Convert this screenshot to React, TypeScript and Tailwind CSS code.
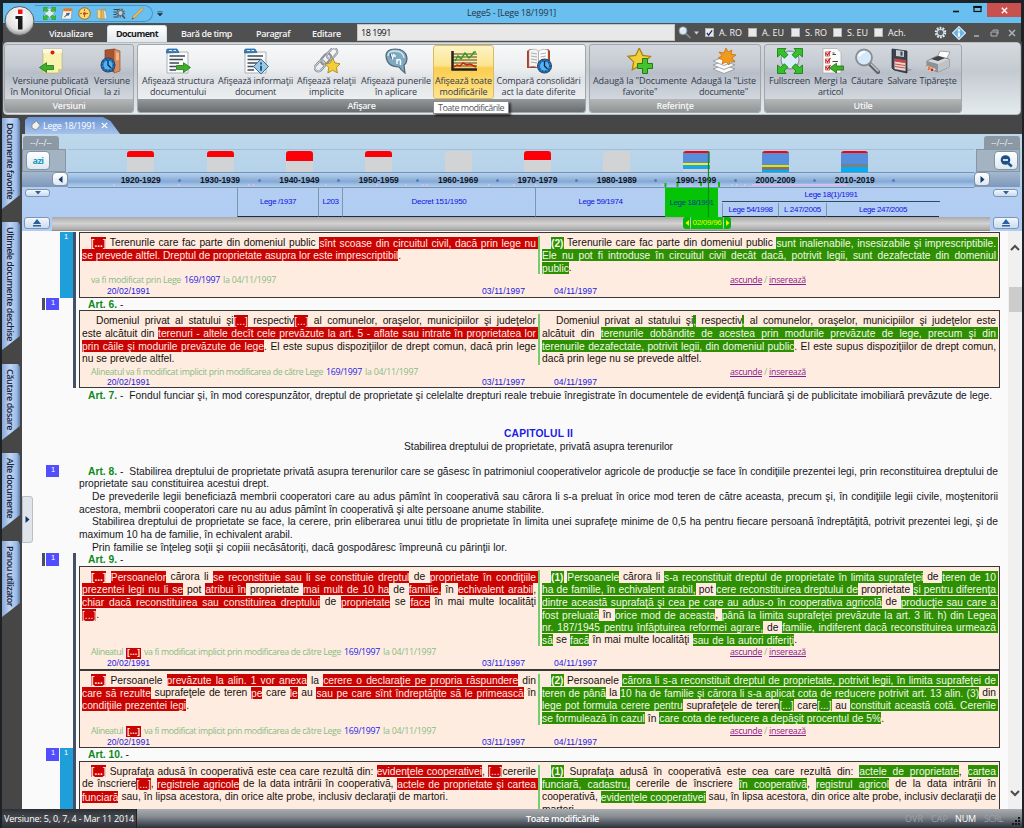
import React, { useLayoutEffect, useRef } from "react";

const UI = "font-['Open_Sans','Noto_Sans',sans-serif]";
const DOC = "font-['Liberation_Sans',Arial,sans-serif]";

/** One line of text tracked so that it fills exactly `w` pixels. */
function Fit({ w, children, className = "" }: { w: number; children: string; className?: string }) {
  const ref = useRef<HTMLSpanElement>(null);
  useLayoutEffect(() => {
    const el = ref.current;
    if (!el) return;
    el.style.letterSpacing = "0px";
    const natural = el.getBoundingClientRect().width;
    el.style.letterSpacing = `${(w - natural) / children.length}px`;
  }, [w, children]);
  return (
    <span ref={ref} className={`inline-block shrink-0 whitespace-pre ${className}`}>
      {children}
    </span>
  );
}

/* ---------- icons ---------- */

const Svg = ({ s = 26, children }: { s?: number; children: React.ReactNode }) => (
  <svg width={s} height={s} viewBox="0 0 26 26" className="shrink-0">
    {children}
  </svg>
);

const GreenArrow = ({ x = 0, y = 0, flip = false }) => (
  <path
    transform={flip ? `translate(${x + 15} ${y}) scale(-1 1)` : `translate(${x} ${y})`}
    d="M.5 3.500h7V.700L14.500 5.500 7.500 10.500V7.600h-7z"
    fill="#3fae2a"
    stroke="#1c7513"
    strokeWidth=".8"
  />
);

const NoteIcon = () => (
  <Svg>
    <path d="M5 1h19v20l-4 4H5z" fill="#f8f3ae" stroke="#b9b27a" strokeWidth=".7" />
    <path d="M24 21h-4v4z" fill="#d8cf7d" />
    <path d="M5 1h19v4H5z" fill="#fcfadc" />
    <circle cx="14.500" cy="4.500" r="2" fill="#e3170d" />
    <GreenArrow x={1} y={14} flip />
  </Svg>
);
const Clock = ({ cx, cy, r }: { cx: number; cy: number; r: number }) => (
  <g>
    <circle cx={cx} cy={cy} r={r} fill="#2f3b49" />
    <circle cx={cx} cy={cy} r={r - 0.8} fill="#2378c6" />
    <circle cx={cx} cy={cy} r={r - 3} fill="#58b0ee" />
    <path d={`M${cx} ${cy - r + 2.5}V${cy}L${cx + 3} ${cy + 3}`} stroke="#0b2747" strokeWidth="1.300" fill="none" />
    <circle cx={cx} cy={cy} r={r - 2} fill="none" stroke="#0f3c74" strokeWidth="1.200" strokeDasharray="1 2.300" />
  </g>
);
const DoorIcon = () => (
  <Svg>
    <path d="M6 2l10-1v23l-10-2z" fill="#a8552f" stroke="#6d3018" strokeWidth=".6" />
    <path d="M15 1l6 2v20l-6 2z" fill="#d98d5f" stroke="#8a4726" strokeWidth=".6" />
    <path d="M17 4l3 1v7l-3 .5z" fill="#efb48b" />
    <Clock cx={9} cy={17} r={7.5} />
  </Svg>
);
const Sheet = ({ children }: { children?: React.ReactNode }) => (
  <Svg>
    <path d="M2 4h21v21H2z" fill="#fbfbfb" stroke="#9aa2aa" strokeWidth=".8" />
    <path d="M1.500 5V2.500Q1.500 1 3 1h9l2 3.500z" fill="#3a7fb8" stroke="#235a8c" strokeWidth=".7" />
    <path d="M4 2.500h3M8.500 2.500H11" stroke="#d6ecfa" strokeWidth="1" />
    <path d="M4.500 8H20M4.500 11.500H18M4.500 15H14M4.500 18.500H11M4.500 22H11" stroke="#3d4b5a" strokeWidth="1.300" />
    {children}
  </Svg>
);
const StructIcon = () => (
  <Sheet>
    <GreenArrow x={11} y={14} />
  </Sheet>
);
const InfoSheetIcon = () => (
  <Sheet>
    <path d="M18 11l7.500 7.500L18 26l-7.500-7.500z" fill="#9cc9e4" stroke="#3f6f92" strokeWidth="1" />
    <path d="M18 14.500v2M18 17.700v5" stroke="#1d5c8c" strokeWidth="2" />
  </Sheet>
);
const Star = ({ d = "", k = 1 }: { d?: string; k?: number }) => (
  <path
    transform={`${d} scale(${k})`}
    d="M9 0l2.800 5.900 6.200.800-4.500 4.400 1.100 6.400L9 14.400 3.400 17.500l1.100-6.400L0 6.700l6.200-.800z"
    fill="#f2cf3a"
    stroke="#a98212"
    strokeWidth="1"
  />
);
const LinkStarIcon = () => (
  <Svg>
    <g fill="none" stroke="#8b9198" strokeWidth="2.200">
      <rect x="14" y="-1" width="7" height="12" rx="3.500" transform="rotate(42 17 6)" />
      <rect x="8.500" y="5" width="7" height="12" rx="3.500" transform="rotate(42 12 11)" />
      <rect x="2.500" y="12" width="7" height="12" rx="3.500" transform="rotate(42 6 18)" />
    </g>
    <g fill="none" stroke="#e4e7ea" strokeWidth=".7">
      <rect x="14" y="-1" width="7" height="12" rx="3.500" transform="rotate(42 17 6)" />
      <rect x="2.500" y="12" width="7" height="12" rx="3.500" transform="rotate(42 6 18)" />
    </g>
    <Star d="translate(11 10)" k={0.85} />
  </Svg>
);
const BubbleIcon = () => (
  <Svg>
    <path d="M3 8Q3 1 12 1Q23 1 24 10Q24 15 21 17L22 25Q18 22 16 19Q4 19 3 8z" fill="#7ea9c0" stroke="#4f6672" strokeWidth="1.200" />
    <path d="M5 8Q5 3 12 3Q20 3 21 10" fill="none" stroke="#cfe6f1" strokeWidth="1.500" />
    <path d="M8 6l1.500 4L11 6M11 8h2" stroke="#f4fbff" strokeWidth="1.500" fill="none" />
    <path d="M14 11v5M14 13q3-3 3.500 0v4" stroke="#f4fbff" strokeWidth="1.500" fill="none" />
    <path d="M7 5.500l1.500 5" stroke="#1c3a4c" strokeWidth=".8" />
  </Svg>
);
const ChartIcon = () => (
  <svg width="28" height="26" viewBox="0 0 28 26" className="shrink-0">
    <path d="M3 6h24M3 9h24M3 12h24M3 15h24M3 18h24" stroke="#4b4736" strokeWidth="1.200" />
    <path d="M2.500 3v18.500H27" stroke="#222" strokeWidth="2.500" fill="none" />
    <path d="M5 13l3-5 3 3 4-6 4 5 3-3 2-3h2" stroke="#2f9d1e" strokeWidth="1.400" fill="none" />
    <path d="M4 19l3-2 3 1 3-3 4 2 3-1 6 3" stroke="#d8200d" strokeWidth="1.500" fill="none" />
  </svg>
);
const BookIcon = () => (
  <Svg>
    <path d="M1 3l3-2 9 2.500L22 1l2 2v17H1z" fill="#ad3e27" />
    <path d="M3 2Q9 0 12.500 3v17Q8 17 3 19z" fill="#f3f3f1" stroke="#8e8e8e" strokeWidth=".5" />
    <path d="M12.500 3Q17 0 22 2v17q-5-2-9.500 1z" fill="#fff" stroke="#8e8e8e" strokeWidth=".5" />
    <path d="M5 5l6 1M5 8l6 1M5 11l6 1M5 14l6 1M14.500 6l5.500-1M14.500 9l5.500-1" stroke="#a0a4a8" strokeWidth=".9" />
    <Clock cx={18.5} cy={18} r={7.5} />
  </Svg>
);
const StarPlusIcon = () => (
  <Svg>
    <Star d="translate(1 0)" k={1.25} />
    <path d="M15.500 10.500h5v5h5v5h-5v5h-5v-5h-5v-5h5z" fill="#46c22d" stroke="#1f7d12" strokeWidth="1" />
  </Svg>
);
const StackIcon = () => (
  <Svg>
    <path d="M2 21l11-4 11 4-11 4.500z" fill="#fafafa" stroke="#8f959c" strokeWidth=".8" />
    <path d="M2 17l11-4 11 4-11 4.500z" fill="#fafafa" stroke="#8f959c" strokeWidth=".8" />
    <path d="M2 13l11-4 11 4-11 4.500z" fill="#fdfdfd" stroke="#8f959c" strokeWidth=".8" />
    <path d="M15 0l2 4 4-2-1 4 5 1-4 3 3 4-5-1-1 4-3-3-4 2 1-4-5-2 4-2-3-4 5 1z" fill="#f29a1c" stroke="#c16c07" strokeWidth=".7" />
  </Svg>
);
const Corners = () => (
  <path
    d="M.5.500h8.500L7 3l4 3.700L7.500 10.200 3.500 6.500.500 9zM25.500.500h-8.500L19 3l-4 3.700 3.500 3.500 4-3.700L25.500 9zM.5 25.500h8.500L7 23l4-3.700-3.500-3.500-4 3.700L.500 17zM25.500 25.500h-8.500L19 23l-4-3.700 3.500-3.500 4 3.700 3-2.500z"
    fill="#35c12c"
    stroke="#14780f"
    strokeWidth=".8"
  />
);
const FullIcon = ({ s = 26 }) => (
  <Svg s={s}>
    <circle cx="13" cy="12" r="9" fill="#d9ecf8" stroke="#8d98a1" strokeWidth="1.300" />
    <Corners />
  </Svg>
);
const ListIcon = () => (
  <Svg>
    <path d="M5 .500h14l4 4V25H5z" fill="#fbfbfb" stroke="#a6a9ad" strokeWidth=".7" />
    <path d="M14.500 6.500H18M14.500 13.500h5.500M14.500 5h2" stroke="#44484c" strokeWidth="1.200" />
    {[4, 11, 18].map((y) => (
      <g key={y}>
        <path d={`M7.500 ${y}h4v4h-4z`} fill="#fff" stroke="#b33a34" strokeWidth=".8" />
        <path d={`M8 ${y + 1}l1.500 2 3-4`} stroke="#d31414" strokeWidth="1.200" fill="none" />
      </g>
    ))}
    <GreenArrow x={11} y={14.5} flip />
  </Svg>
);
const LensIcon = ({ s = 26 }) => (
  <Svg s={s}>
    <path d="M16 16l8 8" stroke="#5d6266" strokeWidth="4" strokeLinecap="round" />
    <path d="M17 16l7 7" stroke="#c7cbce" strokeWidth="1.500" strokeLinecap="round" />
    <circle cx="10" cy="9.500" r="8" fill="#d6e9f8" stroke="#888e94" strokeWidth="1.800" />
    <path d="M5 8q2-4 6-4" stroke="#fff" strokeWidth="2" fill="none" />
  </Svg>
);
const DiskIcon = () => (
  <Svg>
    <path d="M12 25l12-3-6-2z" fill="#9fa3a7" />
    <path d="M3 1l15 2v22L5 22 3 20z" fill="#3b4250" stroke="#20252e" strokeWidth=".7" />
    <path d="M7 2l8 1v6L7 8z" fill="#c9ced4" />
    <path d="M11.500 3.500l2 .2v4l-2-.2z" fill="#3b4250" />
    <path d="M5.500 11l11 1.500v10.500L5.500 21z" fill="#e8d5d1" />
    <path d="M5.500 11l11 1.500v2.200L5.500 13zM6 16l10 1.500M6 18.500L16 20" fill="#c5443c" stroke="#c5443c" strokeWidth=".9" />
  </Svg>
);
const PrintIcon = () => (
  <Svg>
    <path d="M12 10l3-7 10 1-4 8z" fill="#fdfdfd" stroke="#888" strokeWidth=".7" />
    <path d="M2 13l10-5 12 3v8l-11 5-11-4z" fill="#d5d7da" stroke="#6c7074" strokeWidth=".8" />
    <path d="M2 13l11 3v8L2 20z" fill="#8e9296" />
    <path d="M13 16l11-5v8l-11 5z" fill="#bfc3c7" />
    <path d="M6 11l7-3 7 2-7 3z" fill="#3e4246" />
    <path d="M2 18l9 3-4 3-6-3z" fill="#fff" stroke="#999" strokeWidth=".4" />
    <circle cx="4" cy="20.500" r="1.700" fill="#e7801c" />
    <circle cx="7" cy="21.800" r="1.500" fill="#d02018" />
  </Svg>
);
const CalIcon = () => (
  <Svg s={12}>
    <path d="M5 3l19-1-2 22H1z" fill="#f3f3f3" stroke="#777" strokeWidth="1" />
    <path d="M6 1h18l-1 6H5z" fill="#ec7a1c" />
    <path d="M7 20l8-6v3l4-6-8 1 2 1z" fill="#35516e" stroke="#35516e" />
  </Svg>
);
const CompassIcon = () => (
  <Svg s={13}>
    <circle cx="13" cy="13" r="11.500" fill="#fbd679" stroke="#a9690d" strokeWidth="2" />
    <path d="M13 4v18M4 13h18" stroke="#a35b08" strokeWidth="1.800" strokeDasharray="4 2" />
    <circle cx="13" cy="13" r="3" fill="#b94f15" />
  </Svg>
);
const FolderIcon = () => (
  <Svg s={12}>
    <path d="M3 3l8 2v19l-8-3z" fill="#f8d985" stroke="#b08732" />
    <path d="M11 4l9-2v20l-9 3z" fill="#edb84c" stroke="#a87620" />
    <path d="M16 5l5 1 3 17-6 1z" fill="#dfe3e6" stroke="#888" />
  </Svg>
);
const GearIcon = () => (
  <Svg s={13}>
    <circle cx="13" cy="13" r="9" fill="none" stroke="#e4eaee" strokeWidth="5" strokeDasharray="3.500 2.150" />
    <circle cx="13" cy="13" r="6.500" fill="#59636b" stroke="#cdd6dc" strokeWidth="2.500" />
  </Svg>
);
const FindGearIcon = () => (
  <Svg s={13}>
    <path d="M1 5h12M1 10h6M1 15h6M1 20h10" stroke="#3a464f" strokeWidth="2" />
    <circle cx="15" cy="12" r="7" fill="none" stroke="#5d676f" strokeWidth="4" strokeDasharray="3 1.800" />
    <circle cx="15" cy="12" r="5" fill="#c6ced5" stroke="#4b545b" strokeWidth="1.500" />
    <path d="M19 17l5 6" stroke="#4b545b" strokeWidth="3" />
  </Svg>
);
const PencilIcon = () => (
  <Svg s={13}>
    <path d="M22 1l3 3L7 22l-5 3 2-6z" fill="#f4c15c" stroke="#a5721b" strokeWidth="1" />
    <path d="M2 25l1.500-4 2.500 2z" fill="#5a4630" />
  </Svg>
);
const DiamondInfo = () => (
  <Svg s={14}>
    <path d="M13 1l12 12-12 12L1 13z" fill="#64b5e5" stroke="#d9eef8" strokeWidth="2" />
    <path d="M13 6v4M13 12v8" stroke="#fff" strokeWidth="4" />
  </Svg>
);

/* ---------- title and menu ---------- */

function TitleBar() {
  return (
    <div className="flex h-[20px] bg-[#69bff0]">
      <div className="ml-[32px] mt-[2px] flex h-[17px] w-[118px] items-center gap-[5px] rounded-r-[9px] border border-l-0 border-[#4b93bd] pl-[8px]">
        <FullIcon s={13} />
        <CalIcon />
        <CompassIcon />
        <FolderIcon />
        <FindGearIcon />
        <PencilIcon />
      </div>
      <div className="mt-[8px] ml-[4px]">
        <svg width="6" height="6" viewBox="0 0 6 6">
          <path d="M.5.800h5M.500 2.500h5L3 5z" fill="#263746" stroke="#263746" strokeWidth=".7" />
        </svg>
      </div>
      <div className={`ml-[304px] mt-[2px] w-[92px] text-[9px] leading-[16px] text-[#1f3644] ${UI}`}>
        <Fit w={89}>Lege5 - [Lege 18/1991]</Fit>
      </div>
      <div className="ml-auto flex">
        <svg width="46" height="14" viewBox="0 0 46 14">
          <path d="M12 8.500h6" stroke="#111" strokeWidth="1.600" />
          <rect x="33" y="3.500" width="7" height="5" fill="none" stroke="#111" strokeWidth="1.200" />
          <path d="M32.500 4h8" stroke="#111" strokeWidth="2" />
        </svg>
        <div className="flex h-[14px] w-[34px] items-center justify-center bg-[#c8504e]">
          <svg width="7" height="7" viewBox="0 0 7 7">
            <path d="M.8.800l5.400 5.400M6.200.800L.800 6.200" stroke="#fff" strokeWidth="1.400" />
          </svg>
        </div>
      </div>
    </div>
  );
}

function Check({ on = false, label, w, gap }: { on?: boolean; label: string; w: number; gap: string }) {
  return (
    <div className={`flex items-center gap-[5px] ${gap}`}>
      <div className="flex size-[9px] items-center justify-center border border-[#b4b4b4] bg-[#e9e9e9]">
        {on && (
          <svg width="8" height="8" viewBox="0 0 8 8">
            <path d="M1 4l2 2.500L7 1" stroke="#16376f" strokeWidth="1.500" fill="none" />
          </svg>
        )}
      </div>
      <Fit w={w}>{label}</Fit>
    </div>
  );
}

function MenuBar() {
  return (
    <div className={`flex h-[19px] items-center bg-[#505050] text-[9px] font-semibold text-[#f4f4f4] ${UI}`}>
      <Fit w={44} className="ml-[46px] mt-[2px]">Vizualizare</Fit>
      <div className="ml-[14px] mt-[2px] flex h-[17px] w-[60px] items-center justify-center rounded-t-[3px] border border-b-0 border-[#c9e4ee] bg-[linear-gradient(#ffffff,#e3e8ec)] font-bold text-[#1c1c1c]">
        <Fit w={42}>Document</Fit>
      </div>
      <Fit w={51} className="ml-[14px] mt-[2px]">Bară de timp</Fit>
      <Fit w={34} className="ml-[24px] mt-[2px]">Paragraf</Fit>
      <Fit w={29} className="ml-[22px] mt-[2px]">Editare</Fit>
      <div className="ml-[16px] flex h-[17px] w-[318px] items-center border border-[#c5c5c5] bg-[#e8e8e8] pl-[3px] text-[9px] font-normal leading-none text-[#111]">
        <Fit w={30}>18 1991</Fit>
      </div>
      <div className="ml-[3px]">
        <LensIcon s={13} />
      </div>
      <svg width="5" height="4" viewBox="0 0 5 4" className="ml-[3px]">
        <path d="M0 .500h5L2.500 3.500z" fill="#cfcfcf" />
      </svg>
      <div className="flex font-medium">
        <Check on label="A. RO" w={23} gap="ml-[6px]" />
        <Check label="A. EU" w={22} gap="ml-[6px]" />
        <Check label="S. RO" w={22} gap="ml-[7px]" />
        <Check label="S. EU" w={21} gap="ml-[6px]" />
        <Check label="Ach." w={18} gap="ml-[6px]" />
      </div>
      <div className="ml-auto mr-[3px] flex items-center">
        <GearIcon />
        <div className="ml-[5px]">
          <DiamondInfo />
        </div>
        <svg width="52" height="12" viewBox="0 0 52 12">
          <path d="M8 9h5" stroke="#aab4bb" strokeWidth="1.500" />
          <path d="M25 5h6v4h-6zM27 4v-1h5v4" stroke="#aab4bb" strokeWidth="1" fill="none" />
          <path d="M43 3l6 6M49 3l-6 6" stroke="#aab4bb" strokeWidth="1.500" />
        </svg>
      </div>
    </div>
  );
}

/* ---------- ribbon ---------- */

type Btn = { box: string; icon: React.ReactNode; l1: string; w1: number; l2?: string; w2?: number; hot?: boolean };

function RibbonButton({ box, icon, l1, w1, l2, w2 = 0, hot }: Btn) {
  return (
    <div
      className={`flex h-[52px] shrink-0 flex-col items-center pt-[2px] ${box} ${
        hot ? "rounded-[2px] bg-[linear-gradient(#fdf3c4_0%,#fce48f_38%,#fbcd4f_42%,#fde58e_100%)] outline outline-[#d9bb62]" : ""
      }`}
    >
      {icon}
      <div className="mt-[2px] h-[10.500px] leading-[10.500px]">
        <Fit w={w1}>{l1}</Fit>
      </div>
      {l2 && (
        <div className="h-[10.500px] leading-[10.500px]">
          <Fit w={w2}>{l2}</Fit>
        </div>
      )}
    </div>
  );
}

function Group({ label, lw, box, pad, light, btns }: { label: string; lw: number; box: string; pad: string; light?: boolean; btns: Btn[] }) {
  return (
    <div
      className={`flex h-[69px] shrink-0 flex-col overflow-hidden rounded-[3px] border border-[#a2a6aa] ${box} ${
        light ? "bg-[linear-gradient(#f7f8f9_0%,#eceef0_35%,#dfe2e5_50%,#f5f7f8_100%)]" : "bg-[linear-gradient(#d3d7dd_0%,#c6cbd3_30%,#b7bec8_42%,#dfe4e8_100%)]"
      }`}
    >
      <div className={`flex h-[54px] pt-[1px] ${pad}`}>
        {btns.map((b) => (
          <RibbonButton key={b.l1 + b.l2} {...b} />
        ))}
      </div>
      <div
        className={`flex h-[13px] items-center justify-center font-semibold text-[#f5f5f5] ${
          light ? "bg-[linear-gradient(#94989b,#6a6d70)]" : "bg-[linear-gradient(#b4b6b8,#919496)]"
        }`}
      >
        <Fit w={lw}>{label}</Fit>
      </div>
    </div>
  );
}

function Ribbon() {
  return (
    <div
      className={`relative z-10 mx-[1px] flex h-[73px] gap-[3px] rounded-[4px] border border-[#b8bcc0] bg-[linear-gradient(#d6dade_0%,#c4cad1_40%,#e4ebed_100%)] pt-[1px] text-[9px] font-medium text-[#34394b] ${UI}`}
    >
      <Group
        label="Versiuni" lw={33} box="w-[130px]" pad="pl-[3px]"
        btns={[
          { box: "w-[85px]", icon: <NoteIcon />, l1: "Versiune publicată", w1: 76, l2: "în Monitorul Oficial", w2: 80 },
          { box: "w-[38px]", icon: <DoorIcon />, l1: "Versiune", w1: 36, l2: "la zi", w2: 16 },
        ]}
      />
      <Group
        light label="Afişare" lw={28} box="w-[449px]" pad="pl-[2px]"
        btns={[
          { box: "w-[76px]", icon: <StructIcon />, l1: "Afişează structura", w1: 72, l2: "documentului", w2: 56 },
          { box: "w-[79px]", icon: <InfoSheetIcon />, l1: "Afişează informaţii", w1: 75, l2: "document", w2: 41 },
          { box: "w-[63px]", icon: <LinkStarIcon />, l1: "Afişează relaţii", w1: 59, l2: "implicite", w2: 35 },
          { box: "w-[76px]", icon: <BubbleIcon />, l1: "Afişează punerile", w1: 70, l2: "în aplicare", w2: 42 },
          { box: "w-[59px]", icon: <ChartIcon />, l1: "Afişează toate", w1: 57, l2: "modificările", w2: 48, hot: true },
          { box: "w-[91px]", icon: <BookIcon />, l1: "Compară consolidări", w1: 84, l2: "act la date diferite", w2: 74 },
        ]}
      />
      <Group
        label="Referinţe" lw={37} box="w-[172px]" pad="pl-[1px]"
        btns={[
          { box: "w-[98px]", icon: <StarPlusIcon />, l1: 'Adaugă la "Documente', w1: 94, l2: 'favorite"', w2: 35 },
          { box: "w-[69px]", icon: <StackIcon />, l1: 'Adaugă la "Liste', w1: 65, l2: 'documente"', w2: 49 },
        ]}
      />
      <Group
        label="Utile" lw={19} box="w-[198px]" pad="pl-[2px]"
        btns={[
          { box: "w-[45px]", icon: <FullIcon />, l1: "Fullscreen", w1: 41 },
          { box: "w-[37px]", icon: <ListIcon />, l1: "Mergi la", w1: 33, l2: "articol", w2: 25 },
          { box: "w-[36px]", icon: <LensIcon />, l1: "Căutare", w1: 32 },
          { box: "w-[34px]", icon: <DiskIcon />, l1: "Salvare", w1: 29 },
          { box: "w-[38px]", icon: <PrintIcon />, l1: "Tipăreşte", w1: 37 },
        ]}
      />
      <div className="absolute left-[429px] top-[58px] flex h-[13px] w-[76px] items-center justify-center border border-[#8a8a8a] bg-white text-[#55585c] shadow-[2px_2px_2px_rgba(0,0,0,0.6)]">
        <Fit w={66}>Toate modificările</Fit>
      </div>
    </div>
  );
}

/* ---------- side tabs ---------- */

function SideTab({ label, box, w }: { label: string; box: string; w: number }) {
  return (
    <div
      className={`w-[18px] shrink-0 bg-[linear-gradient(90deg,#86a8dc_0%,#c2d6f3_45%,#9dbbe6_80%,#5f7fae_100%)] pl-[2px] pt-[5px] [clip-path:polygon(0_0,90%_0,100%_3px,100%_calc(100%-14px),0_100%)] ${box}`}
    >
      <div className="text-[9px] font-semibold leading-[13px] text-[#16243c] [writing-mode:vertical-rl]">
        <FitV w={w}>{label}</FitV>
      </div>
    </div>
  );
}
function FitV({ w, children }: { w: number; children: string }) {
  const ref = useRef<HTMLSpanElement>(null);
  useLayoutEffect(() => {
    const el = ref.current;
    if (!el) return;
    el.style.letterSpacing = "0px";
    const natural = el.getBoundingClientRect().height;
    el.style.letterSpacing = `${(w - natural) / children.length}px`;
  }, [w, children]);
  return (
    <span ref={ref} className="inline-block whitespace-pre">
      {children}
    </span>
  );
}

/* ---------- timeline ---------- */

const DECADES: { y: string; bar: React.ReactNode }[] = [
  { y: "1920-1929", bar: <div className="h-[6px] bg-[#fb0007]" /> },
  { y: "1930-1939", bar: <div className="h-[6px] bg-[#fb0007]" /> },
  { y: "1940-1949", bar: <div className="h-[10px] bg-[#fb0007]" /> },
  { y: "1950-1959", bar: <div className="h-[6px] bg-[#fb0007]" /> },
  { y: "1960-1969", bar: null },
  { y: "1970-1979", bar: <div className="h-[9px] bg-[#fb0007]" /> },
  { y: "1980-1989", bar: null },
  {
    y: "1990-1999",
    bar: (
      <>
        <div className="h-[2px] bg-[#fb0007]" />
        <div className="h-[10px] bg-[#568edb]" />
        <div className="h-[2px] bg-[#fdf000]" />
        <div className="h-[4px] bg-[#1aa6ec]" />
      </>
    ),
  },
  {
    y: "2000-2009",
    bar: (
      <>
        <div className="h-[2px] bg-[#fb0007]" />
        <div className="h-[12px] bg-[#568edb]" />
        <div className="h-[2px] bg-[#e8e000]" />
        <div className="h-[3px] bg-[#777]" />
        <div className="h-[3px] bg-[#06acf2]" />
      </>
    ),
  },
  {
    y: "2010-2019",
    bar: (
      <>
        <div className="h-[2px] bg-[#fb0007]" />
        <div className="h-[11px] bg-[#568edb]" />
        <div className="h-[3px] bg-[#7c7f84]" />
        <div className="h-[6px] bg-[#06acf2]" />
      </>
    ),
  },
];

const Tri = ({ d, w = 8, h = 6, fill = "#2d5f9e" }: { d: string; w?: number; h?: number; fill?: string }) => (
  <svg width={w} height={h} viewBox={`0 0 ${w} ${h}`}>
    <path d={d} fill={fill} />
  </svg>
);

const knob = "flex items-center justify-center rounded-[3px] border border-[#7d95b3] bg-[linear-gradient(#f2f7fc,#c9dcee)]";

function TimelineSide({ right }: { right?: boolean }) {
  return (
    <div className={`flex w-[46px] shrink-0 flex-col ${right ? "mr-[2px] items-end" : "items-start"}`}>
      <div className={`mt-[2px] flex h-[13px] w-[36px] items-center justify-center rounded-t-[3px] bg-[#8c99a5] text-[8px] text-[#eef2f5] ${right ? "" : "ml-[1px]"}`}>
        --/--/--
      </div>
      <div className={`flex h-[23px] w-[44px] items-start border border-[#8696a5] bg-[#a3b3c2] pt-[1px] ${right ? "justify-end pr-[1px]" : "pl-[3px]"}`}>
        <div className="flex h-[19px] w-[24px] items-center justify-center rounded-[4px] border border-[#7f93a8] bg-[linear-gradient(#ffffff,#dfe8f0)]">
          {right ? (
            <svg width="14" height="14" viewBox="0 0 14 14">
              <circle cx="6.500" cy="6" r="4.800" fill="#1d4f8c" />
              <path d="M4 6h5" stroke="#ffffff" strokeWidth="1.600" />
              <path d="M9.500 9.500l3.300 3" stroke="#1d4f8c" strokeWidth="2.400" />
            </svg>
          ) : (
            <Fit w={11} className="text-[9px] font-bold text-[#1b9bc0]">azi</Fit>
          )}
        </div>
      </div>
      <div className={`flex h-[15px] w-[46px] bg-[linear-gradient(#a4b8cf,#7d98ba)] ${right ? "justify-start" : "justify-end"}`}>
        <div className="flex h-[14px] w-[16px] items-center justify-center rounded-[4px] border border-[#7f93a8] bg-[linear-gradient(#ffffff,#dfe8f0)]">
          <Tri w={5} h={7} fill="#143a6e" d={right ? "M.5 0l4 3.500-4 3.500z" : "M4.500 0v7L.500 3.500z"} />
        </div>
      </div>
      <div className={`mt-[2px] h-[8px] w-[25px] ${right ? "mr-[2px]" : "ml-[3px]"} ${knob}`}>
        <Tri d="M1 1h6L4 4.500z" />
      </div>
      <div className={`mt-[20px] h-[12px] w-[26px] ${right ? "mr-[1px]" : "ml-[2px]"} ${knob}`}>
        <Tri h={8} d="M0 5h8L4 0zM0 6h8v1.500H0z" />
      </div>
    </div>
  );
}

function Law({ label, w, box }: { label: string; w: number; box: string }) {
  return (
    <div className={`flex shrink-0 items-center justify-center border-b border-l border-b-[#1f2c3c] border-l-[#7f94ad] text-[#1111e4] ${box}`}>
      <Fit w={w}>{label}</Fit>
    </div>
  );
}

function Timeline() {
  return (
    <div className="relative flex h-[97px] shrink-0 bg-[linear-gradient(#bdd8ea_0px,#b6d2ea_39px,#b3cef1_54px,#b0ccf4_97px)]">
      <TimelineSide />
      <div className="flex min-w-0 flex-1 flex-col">
        <div className="h-[16px] border-b border-[#a2bfd8]" />
        <div className="flex h-[22px] pl-[33px]">
          {DECADES.map((d) => (
            <div key={d.y} className="flex w-[79.350px] shrink-0 justify-center">
              <div className="mt-[1px] h-[21px] w-[27px] overflow-hidden rounded-t-[3px] bg-[#d2d3d4]">{d.bar}</div>
            </div>
          ))}
        </div>
        <div className={`flex h-[16px] border-y border-[#6f93bd] bg-[linear-gradient(#b9d1ea_0%,#84a9d6_60%,#b5cfea_100%)] pl-[33px] text-[8.500px] font-bold leading-[15px] text-[#10151c] ${DOC}`}>
          {DECADES.map((d) => (
            <div key={d.y} className="relative flex w-[79.350px] shrink-0 justify-center">
              <Fit w={40}>{d.y}</Fit>
              <div className="absolute -right-[1px] top-[6px] size-[3px] rounded-full bg-[#4d80c0]" />
            </div>
          ))}
        </div>
        <div className={`flex h-[29px] pl-[169px] text-[8px] ${DOC}`}>
          <Law label="Lege /1937" w={36} box="w-[81px]" />
          <Law label="L203" w={16} box="w-[24px]" />
          <Law label="Decret 151/1950" w={55} box="w-[193px]" />
          <Law label="Lege 59/1974" w={44} box="w-[130px]" />
          <div className="flex w-[53px] shrink-0 items-center justify-center bg-[#05c405] text-[#0a3c9a]">
            <Fit w={44}>Lege 18/1991</Fit>
          </div>
          <div className="ml-[4px] flex w-[218px] flex-col">
            <div className="flex h-[14px] items-center justify-center border-b border-[#33475f] text-[#1111e4]">
              <Fit w={53}>Lege 18(1)/1991</Fit>
            </div>
            <div className="flex flex-1 pt-[1px]">
              <Law label="Lege 54/1998" w={44} box="w-[56px]" />
              <Law label="L 247/2005" w={37} box="w-[48px]" />
              <Law label="Lege 247/2005" w={48} box="w-[113px]" />
            </div>
          </div>
        </div>
        <div className="-mx-[16px] flex h-[14px] border-b border-[#8e8e8e] bg-[linear-gradient(#a9a9a9,#d2d2d2_50%,#a7a7a7)] pl-[631px]">
          <div className={`flex h-[12px] items-center text-[8px] text-[#f2f200] ${DOC}`}>
            <div className="flex h-[12px] w-[7px] items-center justify-center rounded-l-[3px] bg-[#05b805]">
              <Tri w={4} h={6} fill="#f2f200" d="M4 0v6L.500 3z" />
            </div>
            <div className="mx-[1px] flex h-[12px] w-[32px] items-center justify-center bg-[#05c405]">
              <Fit w={29}>02/09/96</Fit>
            </div>
            <div className="flex h-[12px] w-[7px] items-center justify-center rounded-r-[3px] bg-[#05b805]">
              <Tri w={4} h={6} fill="#f2f200" d="M0 0l3.500 3L0 6z" />
            </div>
          </div>
        </div>
      </div>
      <TimelineSide right />
      <svg className="absolute left-0 top-0" width="1000" height="97" viewBox="0 0 1000 97">
        <path d="M686.500 17v66" stroke="#0a8f14" strokeWidth="1.200" />
        <path d="M643.500 49v4M655.500 49v4M679 49v3M697 48v5" stroke="#05c405" strokeWidth="2" />
        <g fill="#e2b9f1">
          {[91, 156, 226, 231, 303, 354, 383, 400, 404, 466, 491, 513, 640, 668, 709, 714, 722].map((x) => (
            <rect key={x} x={x} y="50" width="1.500" height="2" />
          ))}
          <rect x="730" y="50" width="95" height="1.500" />
        </g>
      </svg>
    </div>
  );
}

/* ---------- document ---------- */

/** ‹…› marks a changed fragment; a leading * makes the fragment bold. */
function Marked({ t, mark, bleed }: { t: string; mark: string; bleed: string }) {
  return (
    <>
      {t.split(/(‹[^›]*›|«[^»]*»)/).filter(Boolean).map((p, i, all) => {
        if (p.startsWith("‹")) {
          const bold = p[1] === "*";
          const last = i === all.length - 1;
          return (
            <span key={i} className={`py-[0.500px] ${mark} ${bold ? "font-bold" : ""} ${last ? bleed : ""}`}>
              {p.slice(bold ? 2 : 1, -1)}
            </span>
          );
        }
        if (p.startsWith("«"))
          return (
            <span key={i} className="font-bold text-[#0d8a18]">
              {p.slice(1, -1)}
            </span>
          );
        return <React.Fragment key={i}>{p}</React.Fragment>;
      })}
    </>
  );
}

const RED = "bg-[#cb0202] text-[#ffeae2]";
const GREEN = "bg-[#2f8f02] text-[#effbe6]";

function Line({ t, box = "", mark = RED }: { t: string; box?: string; mark?: string }) {
  const just = box.includes("nj") ? "" : "[text-align-last:justify]";
  return (
    <div className={`h-[12.670px] whitespace-nowrap leading-[14px] ${just} ${box}`}>
      <Marked t={t} mark={mark} bleed={mark === RED ? "shadow-[2px_0_0_#cb0202]" : "shadow-[2px_0_0_#2f8f02]"} />
    </div>
  );
}

type L = [string, string?];

function Gutter({ tick, badge, cyan, bar }: { tick?: boolean; badge?: boolean; cyan?: "first" | "rest"; bar?: boolean }) {
  return (
    <div className="flex w-[57px] shrink-0 pl-[20px] text-[7.500px] leading-[10px] text-white">
      <div className={`mr-[1px] w-[3px] ${tick ? "bg-[#44506a]" : ""}`} />
      <div className={`mr-[1px] h-[12.500px] w-[13px] pl-[5px] ${badge ? "bg-[#524dff]" : ""}`}>{badge && "1"}</div>
      <div className={`w-[13px] pl-[4px] ${cyan ? "bg-[#1f9fda]" : ""}`}>{cyan === "first" && "1"}</div>
      <div className={`w-[3px] ${bar ? "bg-[#44506a]" : ""}`} />
    </div>
  );
}

function Note({ head, text, w }: { head?: boolean; text: string; w: number }) {
  return (
    <div className={`flex w-[650px] items-center text-[8.800px] text-[#86bd84] ${UI}`}>
      {head && (
        <>
          <Fit w={32}>Alineatul</Fit>
          <span className="mx-[3px] flex h-[11px] items-center bg-[#cb0202] px-[1px] font-bold text-[#ffeae2]">
            <Fit w={13}>[...]</Fit>
          </span>
        </>
      )}
      <Fit w={w}>{text}</Fit>
      <Fit w={36} className="ml-[3px] text-[#2222e8]">169/1997</Fit>
      <Fit w={53} className="ml-[3px]">la 04/11/1997</Fit>
    </div>
  );
}

function Compare({ h, left, right, rows, note, gutter }: { h: string; left: L[]; right: L[]; rows: string; note?: React.ReactNode; gutter: React.ReactNode }) {
  return (
    <div className={`flex shrink-0 ${h}`}>
      {gutter}
      <div className="w-[921px] border border-[#3a3835] bg-[#ffece0] pt-[3px] text-[10.250px] text-[#16100c]">
        <div className={`flex ${rows}`}>
          <div className="w-[458px] pl-[2px] pr-[2px]">
            {left.map(([t, b], i) => (
              <Line key={i} t={t} box={b} />
            ))}
          </div>
          <div className="mr-[2px] w-[2px] bg-[#72cf6b]" />
          <div className="w-[454px]">
            {right.map(([t, b], i) => (
              <Line key={i} t={t} box={b} mark={GREEN} />
            ))}
          </div>
        </div>
        {note && (
          <>
            <div className="flex h-[12px] items-center pl-[11px] pt-[2px]">
              <div className="w-[639px]">{note}</div>
              <div className={`flex items-center text-[8.800px] text-[#8c1a8c] ${UI}`}>
                <Fit w={32} className="underline">ascunde</Fit>
                <span className="w-[7px] text-center text-[#86bd84]">/</span>
                <Fit w={37} className="underline">inserează</Fit>
              </div>
            </div>
            <div className="flex h-[11px] items-center pl-[27px] text-[8.600px] text-[#1b1be6]">
              <Fit w={43}>20/02/1991</Fit>
              <Fit w={43} className="ml-[332px]">03/11/1997</Fit>
              <Fit w={43} className="ml-[29px]">04/11/1997</Fit>
            </div>
          </>
        )}
      </div>
    </div>
  );
}

function Article({ n, gutter }: { n: string; gutter: React.ReactNode }) {
  return (
    <div className="flex h-[12.750px] shrink-0">
      {gutter}
      <div className="pl-[9px] leading-[14px]">
        <span className="font-bold text-[#0d8a18]">Art. {n}.</span> -
      </div>
    </div>
  );
}

function Document() {
  return (
    <div className={`flex min-w-0 flex-1 flex-col overflow-hidden bg-[#fafafa] pt-[1px] text-[10.250px] text-[#16161a] ${DOC}`}>
      <Compare
        h="h-[65.500px]" rows="h-[38px]" gutter={<Gutter cyan="first" bar />}
        left={[
          ["‹*[...]› Terenurile care fac parte din domeniul public ‹sînt scoase din circuitul civil, dacă prin lege nu›", "pl-[9px]"],
          ["‹se prevede altfel. Dreptul de proprietate asupra lor este imprescriptibil›.", "w-[318px]"],
        ]}
        right={[
          ["‹*(2)› Terenurile care fac parte din domeniul public ‹sunt inalienabile, insesizabile şi imprescriptibile.›", "pl-[9px]"],
          ["‹Ele nu pot fi introduse în circuitul civil decât dacă, potrivit legii, sunt dezafectate din domeniul›"],
          ["‹public›.", "nj"],
        ]}
        note={<Note text="va fi modificat prin Lege" w={90} />}
      />
      <Article n="6" gutter={<Gutter tick badge bar />} />
      <Compare
        h="h-[78px]" rows="h-[51px]" gutter={<Gutter bar />}
        left={[
          ["Domeniul privat al statului şi‹[...]› respectiv‹[...]› al comunelor, oraşelor, municipiilor şi judeţelor", "pl-[14px]"],
          ["este alcătuit din ‹terenuri - altele decît cele prevăzute la art. 5 - aflate sau intrate în proprietatea lor›"],
          ["‹prin căile şi modurile prevăzute de lege›. El este supus dispoziţiilor de drept comun, dacă prin lege"],
          ["nu se prevede altfel.", "w-[90px]"],
        ]}
        right={[
          ["Domeniul privat al statului şi‹,› respectiv‹,› al comunelor, oraşelor, municipiilor şi judeţelor este", "pl-[14px]"],
          ["alcătuit din ‹terenurile dobândite de acestea prin modurile prevăzute de lege, precum şi din›"],
          ["‹terenurile dezafectate, potrivit legii, din domeniul public›. El este supus dispoziţiilor de drept comun,"],
          ["dacă prin lege nu se prevede altfel.", "w-[158px]"],
        ]}
        note={<Note text="Alineatul va fi modificat implicit prin modificarea de către Lege" w={232} />}
      />
      <div className="pl-[57px]">
        <Line
          box="ml-[9px] mt-[1px] w-[904px]"
          t="«Art. 7.» -&nbsp; Fondul funciar şi, în mod corespunzător, dreptul de proprietate şi celelalte drepturi reale trebuie înregistrate în documentele de evidenţă funciară şi de publicitate imobiliară prevăzute de lege."
        />
      </div>
      <div className="mt-[26.500px] flex h-[24.330px] flex-col items-center pl-[47px] leading-[12.670px]">
        <Fit w={69} className="font-bold text-[#1b1be6]">CAPITOLUL II</Fit>
        <Fit w={269}>Stabilirea dreptului de proprietate, privată asupra terenurilor</Fit>
      </div>
      <div className="mt-[12px] flex shrink-0">
        <Gutter badge />
        <div className="w-[919px]">
          <Line box="pl-[9px]" t="«Art. 8.» -&nbsp; Stabilirea dreptului de proprietate privată asupra terenurilor care se găsesc în patrimoniul cooperativelor agricole de producţie se face în condiţiile prezentei legi, prin reconstituirea dreptului de" />
          <Line box="w-[190px]" t="proprietate sau constituirea acestui drept." />
          <Line box="pl-[13px]" t="De prevederile legii beneficiază membrii cooperatori care au adus pămînt în cooperativă sau cărora li s-a preluat în orice mod teren de către aceasta, precum şi, în condiţiile legii civile, moştenitorii" />
          <Line box="w-[465px]" t="acestora, membrii cooperatori care nu au adus pămînt în cooperativă şi alte persoane anume stabilite." />
          <Line box="pl-[13px]" t="Stabilirea dreptului de proprietate se face, la cerere, prin eliberarea unui titlu de proprietate în limita unei suprafeţe minime de 0,5 ha pentru fiecare persoană îndreptăţită, potrivit prezentei legi, şi de" />
          <Line box="w-[213px]" t="maximum 10 ha de familie, în echivalent arabil." />
          <Line box="pl-[13px] w-[428px]" t="Prin familie se înţeleg soţii şi copiii necăsătoriţi, dacă gospodăresc împreună cu părinţii lor." />
        </div>
      </div>
      <Article n="9" gutter={<Gutter tick badge bar />} />
      <Compare
        h="h-[103.500px]" rows="h-[76px]" gutter={<Gutter bar />}
        left={[
          ["‹*[...]› ‹Persoanelor› cărora li ‹se reconstituie sau li se constituie dreptul› de ‹proprietate în condiţiile›", "pl-[9px]"],
          ["‹prezentei legi nu li se› pot ‹atribui în› proprietate ‹mai mult de 10 ha› de ‹familie,› în ‹echivalent arabil›,"],
          ["‹chiar dacă reconstituirea sau constituirea dreptului› de ‹proprietate› se ‹face› în mai multe localităţi"],
          ["‹[...]›.", "nj"],
        ]}
        right={[
          ["‹*(1)› ‹Persoanele› cărora li ‹s-a reconstituit dreptul de proprietate în limita suprafeţei› de ‹teren de 10›", "pl-[9px]"],
          ["‹ha de familie, în echivalent arabil,› pot ‹cere reconstituirea dreptului de› proprietate ‹şi pentru diferenţa›"],
          ["‹dintre această suprafaţă şi cea pe care au adus-o în cooperativa agricolă› de ‹producţie sau care a›"],
          ["‹fost preluată› în ‹orice mod de aceasta›, ‹până la limita suprafeţei prevăzute la art. 3 lit. h) din Legea›"],
          ["‹nr. 187/1945 pentru înfăptuirea reformei agrare,› de ‹familie, indiferent dacă reconstituirea urmează›"],
          ["‹să› se ‹facă› în mai multe localităţi ‹sau de la autori diferiţi›.", "w-[255px]"],
        ]}
        note={<Note head text="va fi modificat implicit prin modificarea de către Lege" w={197} />}
      />
      <Compare
        h="h-[78.500px]" rows="h-[51px]" gutter={<Gutter bar />}
        left={[
          ["‹*[...]› Persoanele ‹prevăzute la alin. 1 vor anexa› la ‹cerere o declaraţie pe propria răspundere› din", "pl-[9px]"],
          ["‹care să rezulte› suprafeţele de teren ‹pe› care ‹le› au ‹sau pe care sînt îndreptăţite să le primească› în"],
          ["‹condiţiile prezentei legi›.", "w-[107px]"],
        ]}
        right={[
          ["‹*(2)› Persoanele ‹cărora li s-a reconstituit dreptul de proprietate, potrivit legii, în limita suprafeţei de›", "pl-[9px]"],
          ["‹teren de până› la ‹10 ha de familie şi cărora li s-a aplicat cota de reducere potrivit art. 13 alin. (3)› din"],
          ["‹lege pot formula cerere pentru› suprafeţele de teren‹[...]› care‹[...]› au ‹constituit această cotă. Cererile›"],
          ["‹se formulează în cazul› în ‹care cota de reducere a depăşit procentul de 5%›.", "w-[342px]"],
        ]}
        note={<Note head text="va fi modificat implicit prin modificarea de către Lege" w={197} />}
      />
      <Article n="10" gutter={<Gutter badge cyan="first" bar />} />
      <Compare
        h="h-[90px]" rows="h-[51px]" gutter={<Gutter cyan="rest" bar />}
        left={[
          ["‹*[...]› Suprafaţa adusă în cooperativă este cea care rezultă din: ‹evidenţele cooperativei›, ‹[...]›cererile", "pl-[9px]"],
          ["de înscriere‹[...]›, ‹registrele agricole› de la data intrării în cooperativă, ‹actele de proprietate şi cartea›"],
          ["‹funciară› sau, în lipsa acestora, din orice alte probe, inclusiv declaraţii de martori.", "w-[366px]"],
        ]}
        right={[
          ["‹*(1)› Suprafaţa adusă în cooperativă este cea care rezultă din: ‹actele de proprietate›, ‹cartea›", "pl-[9px]"],
          ["‹funciară, cadastru,› cererile de înscriere ‹în cooperativă›, ‹registrul agricol› de la data intrării în"],
          ["cooperativă, ‹evidenţele cooperativei› sau, în lipsa acestora, din orice alte probe, inclusiv declaraţii de"],
          ["martori.", "nj"],
        ]}
      />
    </div>
  );
}

/* ---------- page ---------- */

export default function App() {
  return (
    <div className="relative flex h-[828px] w-[1024px] flex-col overflow-hidden bg-[#1d2226] px-[3px] pt-[3px]">
      <TitleBar />
      <MenuBar />
      <div className="-mx-[1px] flex flex-1 flex-col overflow-hidden bg-[#464646]">
        <Ribbon />
        <div className="flex h-[694px] shrink-0">
          <div className={`flex w-[20px] shrink-0 flex-col pt-[3px] ${UI}`}>
            <SideTab label="Documente favorite" box="h-[91px]" w={76} />
            <SideTab label="Ultimele documente deschise" box="mt-[13px] h-[128px]" w={114} />
            <SideTab label="Căutare dosare" box="mt-[14px] h-[76px]" w={61} />
            <SideTab label="Alte documente" box="mt-[13px] h-[76px]" w={60} />
            <SideTab label="Panou utilizator" box="mt-[12px] h-[76px]" w={60} />
          </div>
          <div className="flex min-w-0 flex-1 flex-col">
            <div className="flex h-[19px] shrink-0 items-end">
              <div className={`ml-[3px] flex h-[17px] w-[95px] items-center bg-[linear-gradient(#6c94d2,#a6c3ec)] pl-[6px] text-[9px] font-medium text-white [clip-path:polygon(0_3px,3px_0,82%_0,90%_4px,100%_100%,0_100%)] ${UI}`}>
                <svg width="10" height="11" viewBox="0 0 10 11">
                  <path d="M1 4.500L5.500 1 9 5.500 5 10 1 8z" fill="#f5f1ea" stroke="#6b7585" strokeWidth=".7" />
                </svg>
                <Fit w={53} className="ml-[2px]">Lege 18/1991</Fit>
                <svg width="7" height="7" viewBox="0 0 7 7" className="ml-[5px]">
                  <path d="M.8.800l5.400 5.400M6.200.800L.800 6.200" stroke="#fff" strokeWidth="1.200" />
                </svg>
              </div>
            </div>
            <Timeline />
            <div className="relative flex min-h-0 flex-1">
              <Document />
              <div className="flex w-[14px] shrink-0 flex-col items-center bg-[#f0f0f0] pb-[12px] pt-[13px]">
                <svg width="10" height="7" viewBox="0 0 10 7" className="shrink-0">
                  <path d="M1 6l4-4 4 4" stroke="#4c4c4c" strokeWidth="2" fill="none" />
                </svg>
                <div className="mt-[36px] h-[25px] w-[13px] shrink-0 bg-[#cccccc]" />
                <svg width="10" height="7" viewBox="0 0 10 7" className="mt-auto shrink-0">
                  <path d="M1 1l4 4 4-4" stroke="#4c4c4c" strokeWidth="2" fill="none" />
                </svg>
              </div>
              <div className="absolute left-0 top-[265px] flex h-[47px] w-[11px] items-center rounded-r-[3px] border border-[#b8bfc7] bg-[#dfe4ea] pl-[2px]">
                <Tri w={5} h={7} fill="#14306a" d="M.5 0l4 3.500-4 3.500z" />
              </div>
            </div>
          </div>
        </div>
        <div className={`flex h-[19px] shrink-0 items-center bg-[linear-gradient(#a9adb0_0%,#878c91_40%,#5d656e_65%,#2b3036_100%)] text-[9px] text-white ${UI}`}>
          <div className="flex h-full w-[135px] items-center border-r border-[#1e2124] bg-[linear-gradient(#2c2f34,#474a50_50%,#2d3035)] pl-[2px]">
            <Fit w={130}>Versiune: 5, 0, 7, 4 - Mar 11 2014</Fit>
          </div>
          <Fit w={73} className="ml-[389px] font-semibold">Toate modificările</Fit>
          <Fit w={18} className="ml-[306px] text-[#9aa0a5]">OVR</Fit>
          <Fit w={17} className="ml-[8px] text-[#9aa0a5]">CAP</Fit>
          <Fit w={21} className="ml-[7px]">NUM</Fit>
          <Fit w={19} className="ml-[8px] text-[#9aa0a5]">SCRL</Fit>
          <svg width="10" height="10" viewBox="0 0 10 10" className="ml-auto mr-[1px] mt-[4px]">
            <path d="M7 1h2v2H7zM4 4h2v2H4zM7 4h2v2H7zM1 7h2v2H1zM4 7h2v2H4zM7 7h2v2H7z" fill="#15181b" />
          </svg>
        </div>
      </div>
      <svg className="absolute left-[4px] top-[5px] z-20" width="32" height="32" viewBox="0 0 32 32">
        <defs>
          <radialGradient id="orb" cx=".5" cy=".35" r=".65">
            <stop offset="0" stopColor="#ffffff" />
            <stop offset=".7" stopColor="#e2e2e2" />
            <stop offset="1" stopColor="#8c8c8c" />
          </radialGradient>
        </defs>
        <circle cx="15.500" cy="16" r="14.500" fill="url(#orb)" stroke="#55595d" strokeWidth="1" />
        <rect x="14" y="4.500" width="4.500" height="4.500" fill="#ee1515" />
        <path d="M11.500 11h7v13.500H14V14h-2.500z" fill="#1a1a1a" />
      </svg>
    </div>
  );
}
